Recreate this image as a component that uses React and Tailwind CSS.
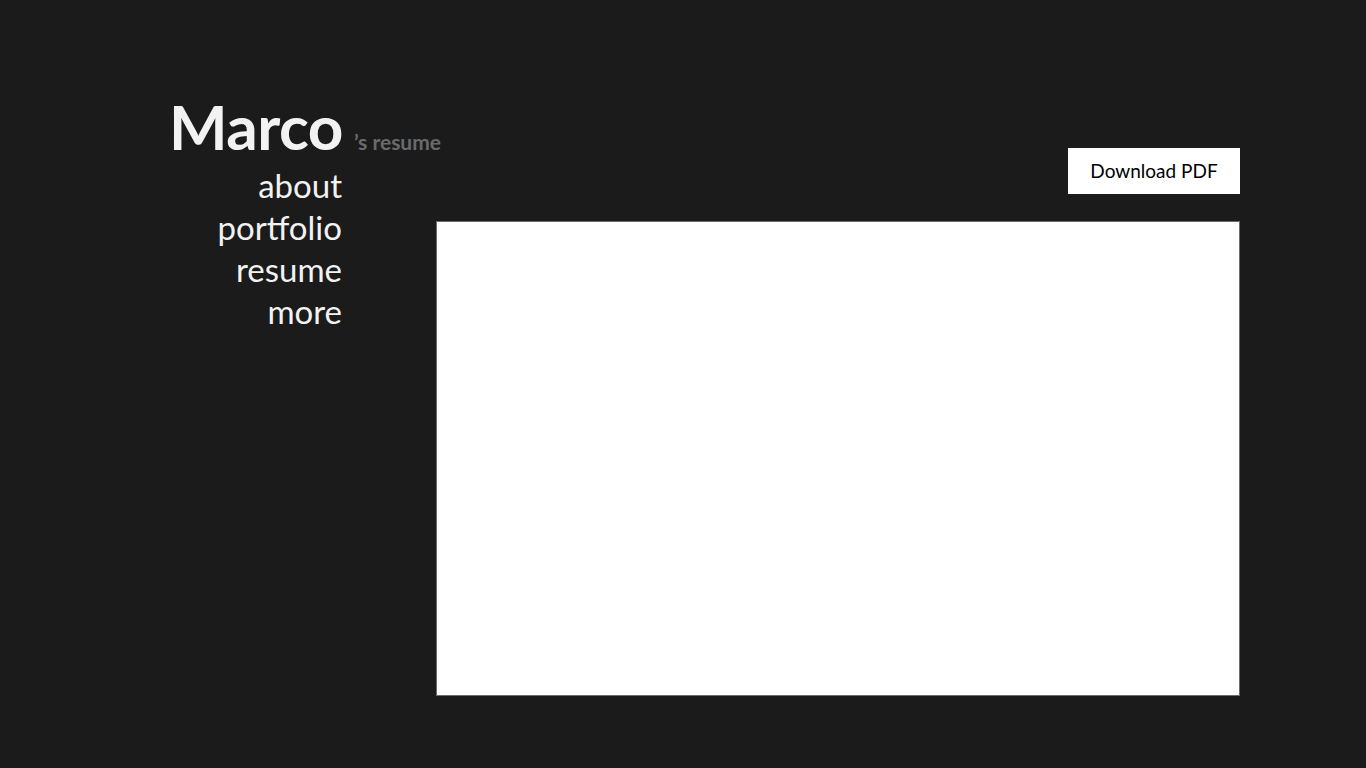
export default function App() {
    const links = ["about", "portfolio", "resume", "more"];
    return (
        <div className="min-h-screen w-full bg-[#1b1b1b] text-[#f2f2f2]" style={{ fontFamily: "Lato, 'Open Sans', sans-serif" }}>
            <div className="flex pl-[169px] pt-[94px]">
                <div className="w-[267px] shrink-0">
                    <div className="flex items-baseline whitespace-nowrap">
                        <h1 className="text-[62px] font-bold leading-[64px] tracking-[-0.5px]">Marco</h1>
                        <span className="ml-[11px] text-[21px] font-bold text-[#6a6a6a]">’s resume</span>
                    </div>
                    <nav className="mt-[6px] flex w-[173px] flex-col items-end">
                        {links.map((l) => (
                            <a key={l} href="#" className="text-[33px] leading-[42px]">
                                {l}
                            </a>
                        ))}
                    </nav>
                </div>
                <div className="w-[804px] pt-[54px]">
                    <div className="flex justify-end">
                        <button className="h-[46px] w-[172px] bg-white text-[19px] text-black">Download PDF</button>
                    </div>
                    <div className="mt-[27px] h-[475px] w-[804px] border border-[#6b6b6b] bg-white"></div>
                </div>
            </div>
        </div>
    );
}
